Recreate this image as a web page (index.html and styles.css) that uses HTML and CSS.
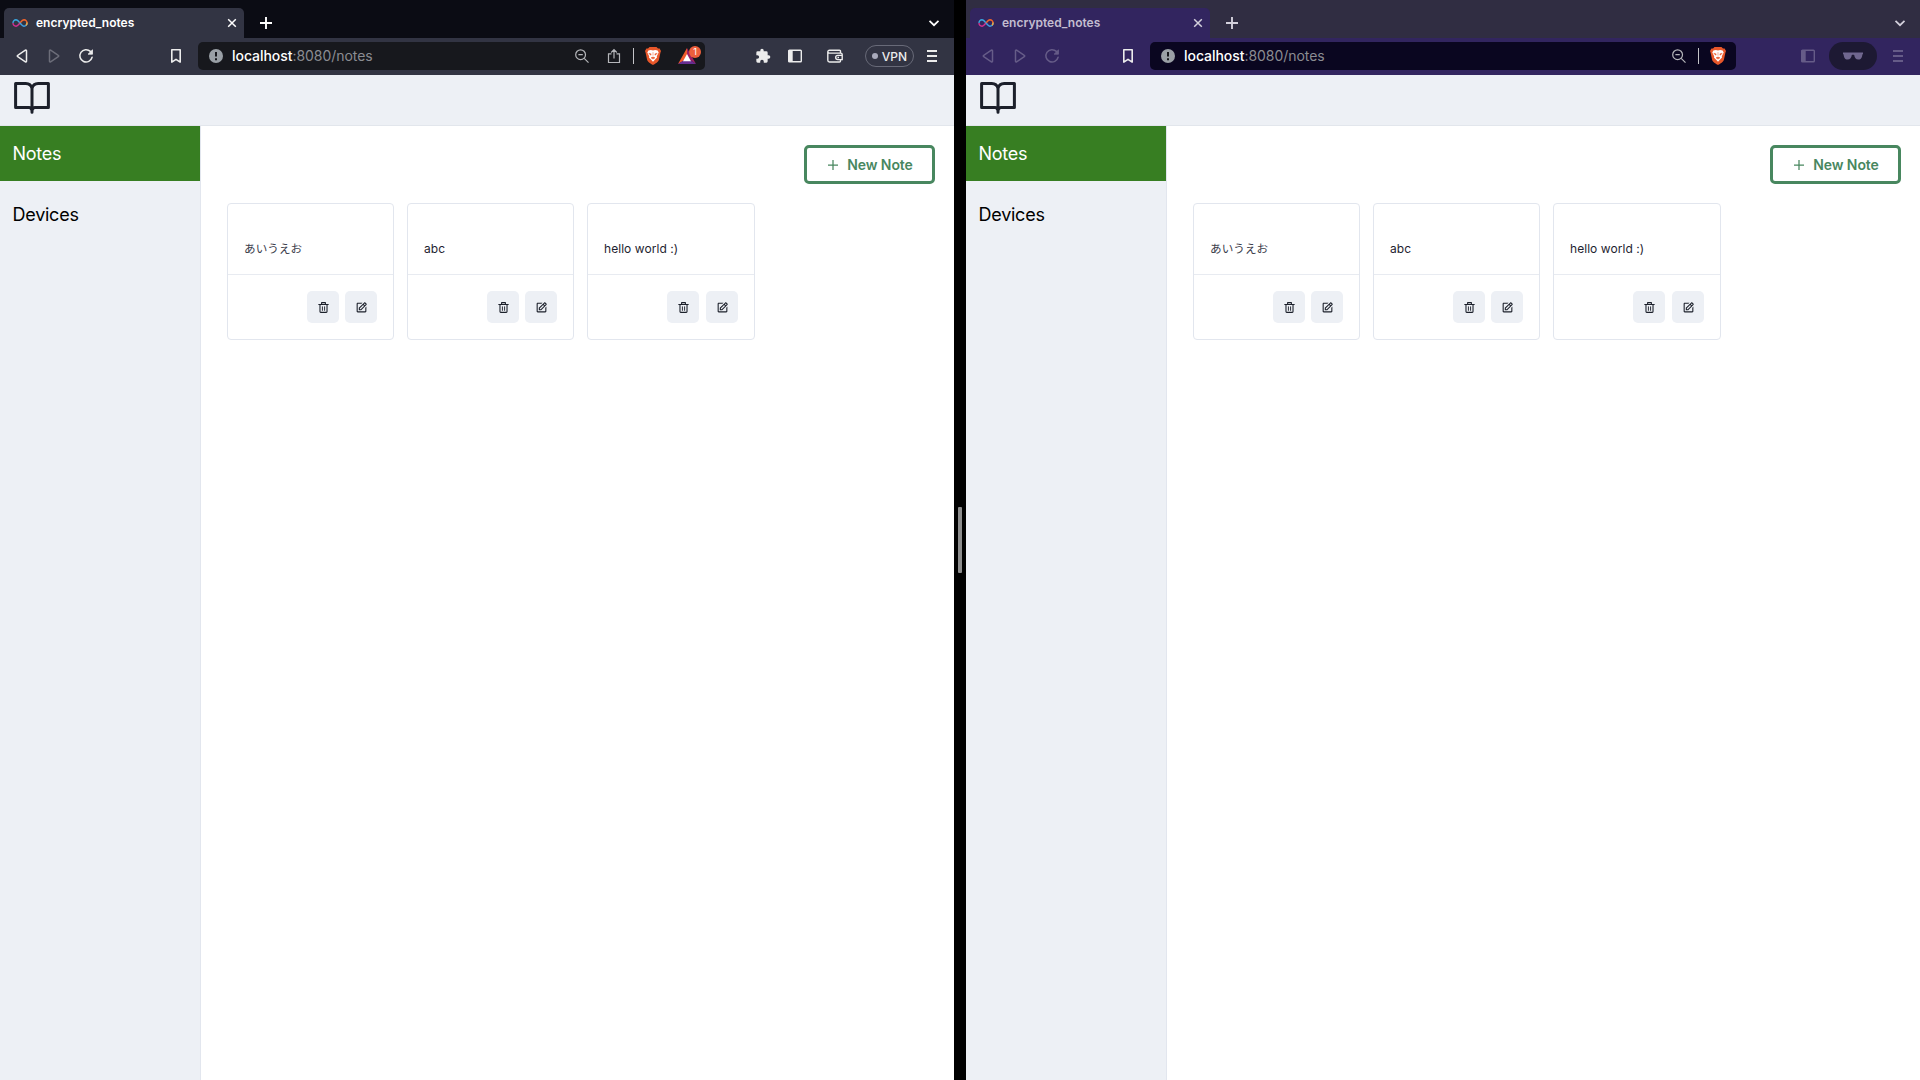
FILE: index.html
```html
<!DOCTYPE html>
<html lang="en">
<head>
<meta charset="utf-8">
<title>encrypted_notes</title>
<link rel="stylesheet" href="styles.css">
</head>
<body>
<svg class="sprite" width="0" height="0" aria-hidden="true">
  <defs>
    <symbol id="infinity" viewBox="0 0 16 10"><path d="M8 5C6.4 3 5.4 1.8 4 1.8A3.1 3.1 0 0 0 1 5" fill="none" stroke="#3aa7df" stroke-width="1.4"/><path d="M1 5A3.1 3.1 0 0 0 4 8.2C5.4 8.2 6.4 7 8 5" fill="none" stroke="#d0318f" stroke-width="1.4"/><path d="M8 5C9.6 3 10.6 1.8 12 1.8A3.1 3.1 0 0 1 15 5" fill="none" stroke="#f0642c" stroke-width="1.4"/><path d="M15 5A3.1 3.1 0 0 1 12 8.2C10.6 8.2 9.6 7 8 5" fill="none" stroke="#3f9fe0" stroke-width="1.4"/><path d="M14.9 4.4A3 3 0 0 1 14 7.3" fill="none" stroke="#f5a83b" stroke-width="1.4"/></symbol>
    <symbol id="back" viewBox="0 0 16 16"><path d="M12.5 2.8v10.4c0 .6-.6.9-1.1.6L3.7 8.7a.8.8 0 0 1 0-1.4l7.7-5.1c.5-.3 1.1 0 1.1.6z" fill="none" stroke="currentColor" stroke-width="1.5"/></symbol>
    <symbol id="reload" viewBox="0 0 16 16"><path d="M12.4 3.4A6.2 6.2 0 1 0 14.1 9.3" fill="none" stroke="currentColor" stroke-width="1.5" stroke-linecap="round"/><path d="M14.5 1.8v4.4h-4.4z" fill="currentColor" stroke="currentColor" stroke-width=".8" stroke-linejoin="round"/></symbol>
    <symbol id="bookmark" viewBox="0 0 16 16"><path d="M3.8 1.7h8.4v12.4L8 11.3l-4.2 2.8z" fill="none" stroke="currentColor" stroke-width="1.6" stroke-linejoin="round"/></symbol>
    <symbol id="info" viewBox="0 0 16 16"><circle cx="8" cy="8" r="7" fill="#9aa0a6"/><path d="M8 4v4.6M8 10.3v2" stroke="#17181d" stroke-width="2"/></symbol>
    <symbol id="zoomout" viewBox="0 0 16 16"><g fill="none" stroke="currentColor" stroke-width="1.2"><circle cx="6.600" cy="6.700" r="4.900"/><path d="M10.200 10.300l4.300 4.300M4.400 6.700h4.400"/></g></symbol>
    <symbol id="share" viewBox="0 0 16 16"><g fill="none" stroke="currentColor" stroke-width="1.2"><path d="M5.500 5.800h-3v8.700h11V5.800h-3M8 10.500V1.800M5.200 4.500L8 1.700l2.800 2.800"/></g></symbol>
    <symbol id="brave" viewBox="0 0 18 20"><path d="M5.500 1h7l1.500 1.600 1.600-.1L17 5l-.6 1.700-1.500 7.100c-.4 1.700-3.600 4.300-5.900 5.200-2.300-.9-5.500-3.500-5.900-5.200L1.600 6.700 1 5l1.400-2.500 1.600.1z" fill="#e8572a"/><path d="M9 4.400l2.200-.5 2.400.7 1.100 2-1.900 3.600.2 1.400L9 15.700l-4-4.100.2-1.400L3.300 6.600l1.100-2 2.400-.7z" fill="#fff"/><path d="M4.800 7.200l2.400.7-.5 1.400zM13.200 7.200l-2.400.7.5 1.400zM9 6.200v3.400M7 11.800l2-.8 2 .8-2 1.300z" fill="#e8572a" stroke="#e8572a" stroke-width=".5"/></symbol>
    <symbol id="bat" viewBox="0 0 18 16"><path d="M9 0L0 16l9-5.300z" fill="#f15a2c"/><path d="M9 0l9 16-9-6z" fill="#9e1f63"/><path d="M0 16h18l-5-3.500H5.500z" fill="#662d91"/><path d="M9 6l4 7.200H5z" fill="#fff"/></symbol>
    <symbol id="puzzle" viewBox="0 0 24 24"><path d="M20.500 11H19V7a2 2 0 0 0-2-2h-4V3.500a2.500 2.500 0 0 0-5 0V5H4a2 2 0 0 0-2 2v3.800h1.500a2.700 2.700 0 0 1 0 5.400H2V20a2 2 0 0 0 2 2h3.800v-1.500a2.700 2.700 0 0 1 5.400 0V22H17a2 2 0 0 0 2-2v-4h1.500a2.500 2.500 0 0 0 0-5z" fill="currentColor"/></symbol>
    <symbol id="panel" viewBox="0 0 16 16"><rect x="1.700" y="2.200" width="12.600" height="11.600" rx=".8" fill="none" stroke="currentColor" stroke-width="1.4"/><path d="M1.500 2h4.200v12H1.500z" fill="currentColor"/></symbol>
    <symbol id="wallet" viewBox="0 0 16 16"><g fill="none" stroke="currentColor" stroke-width="1.4"><path d="M13.500 4.800V3.200a1 1 0 0 0-1-1h-10A1.700 1.700 0 0 0 .8 3.900v8.400A1.700 1.700 0 0 0 2.500 14h10a1 1 0 0 0 1-1v-1.200M.8 3.700c0 .8.700 1.400 1.700 1.400h11.300c.8 0 1.400.6 1.400 1.300v5.200h-4.400a2.100 2.100 0 0 1 0-4.200h4.400M10.500 9.500h1.500"/></g></symbol>
    <symbol id="menu" viewBox="0 0 16 16"><path d="M3 3h10M3 8h10M3 13h10" stroke="currentColor" stroke-width="1.9"/></symbol>
    <symbol id="glasses" viewBox="0 0 20 8"><path d="M0 .4h20v1.800h-.6c-.2 3-1.200 5.300-4 5.300-2.700 0-3.800-2-4.200-4.500-.7-.5-1.700-.5-2.400 0C8.400 5.500 7.300 7.500 4.600 7.500c-2.800 0-3.800-2.300-4-5.300H0z" fill="currentColor"/></symbol>
    <symbol id="chevron" viewBox="0 0 12 12"><path d="M1.500 3.800L6 8.200l4.500-4.400" fill="none" stroke="currentColor" stroke-width="1.7"/></symbol>
    <symbol id="close" viewBox="0 0 10 10"><path d="M1.200 1.200l7.600 7.600M8.800 1.200L1.200 8.800" stroke="currentColor" stroke-width="1.5"/></symbol>
    <symbol id="plus" viewBox="0 0 12 12"><path d="M6 0v12M0 6h12" stroke="currentColor" stroke-width="var(--w, 1.9)"/></symbol>
    <symbol id="book" viewBox="0 0 36 32"><path d="M18 6.500C17.300 3.600 15 1.600 11.800 1.600H1.600v23.800H15c1.600 0 2.600 1 3 3M18 6.500c.7-2.900 3-4.900 6.200-4.900h10.200v23.800H21c-1.600 0-2.600 1-3 3M18 6.500v23.700" fill="none" stroke="currentColor" stroke-width="3" stroke-linejoin="round" stroke-linecap="round"/></symbol>
    <symbol id="trash" viewBox="0 0 24 24"><path fill="none" stroke="currentColor" stroke-width="2" stroke-linejoin="round" d="M5.500 7v12.500c0 .8.500 1.500 1.300 1.500h10.400c.8 0 1.300-.7 1.300-1.500V7M2.500 6.500h19M8.500 6V3h7v3"/><path stroke="currentColor" stroke-width="1.7" d="M10 10v8M14 10v8"/></symbol>
    <symbol id="edit" viewBox="0 0 24 24"><path fill="currentColor" d="m7 17.013 4.413-.015 9.632-9.540c.378-.378.586-.880.586-1.414s-.208-1.036-.586-1.414l-1.586-1.586c-.756-.756-2.075-.752-2.825-.003L7 12.583v4.430zM18.045 4.458l1.589 1.583-1.597 1.582-1.586-1.585 1.594-1.580zM9 13.417l6.030-5.973 1.586 1.586-6.029 5.971L9 15.006v-1.589z"/><path fill="currentColor" d="M5 21h14c1.103 0 2-.897 2-2v-8.668l-2 2V19H5V5h6.847l2-2H5c-1.103 0-2 .897-2 2v14c0 1.103.897 2 2 2z"/></symbol>
  </defs>
</svg>
<div class="desktop">
  <section class="window">
    <div class="tabs">
      <div class="tab"><svg class="favicon"><use href="#infinity"/></svg><span class="tab-title">encrypted_notes</span><svg class="close"><use href="#close"/></svg></div>
      <svg class="new-tab"><use href="#plus"/></svg>
      <svg class="chevron"><use href="#chevron"/></svg>
    </div>
    <div class="toolbar">
      <svg class="ico"><use href="#back"/></svg>
      <svg class="ico flip dim"><use href="#back"/></svg>
      <svg class="ico"><use href="#reload"/></svg>
      <svg class="ico mark"><use href="#bookmark"/></svg>
      <div class="url">
        <svg class="ico"><use href="#info"/></svg>
        <span class="address"><b>localhost</b>:8080/notes</span>
        <svg class="ico soft"><use href="#zoomout"/></svg>
        <svg class="ico soft share"><use href="#share"/></svg>
        <i class="sep"></i>
        <svg class="lion"><use href="#brave"/></svg>
        <span class="rewards"><svg><use href="#bat"/></svg><span class="count">1</span></span>
      </div>
      <div class="actions">
        <svg class="ico"><use href="#puzzle"/></svg>
        <svg class="ico panel"><use href="#panel"/></svg>
        <svg class="ico wallet"><use href="#wallet"/></svg>
        <span class="vpn"><i></i>VPN</span>
        <svg class="ico menu"><use href="#menu"/></svg>
      </div>
    </div>
    <header class="header"><svg class="book"><use href="#book"/></svg></header>
    <div class="body">
      <nav class="side"><a class="link active">Notes</a><a class="link">Devices</a></nav>
      <main class="main">
        <button class="new-note"><svg><use href="#plus"/></svg>New Note</button>
        <div class="cards">
          <article class="card"><p class="jp">あいうえお</p><footer><button><svg><use href="#trash"/></svg></button><button><svg><use href="#edit"/></svg></button></footer></article>
          <article class="card"><p>abc</p><footer><button><svg><use href="#trash"/></svg></button><button><svg><use href="#edit"/></svg></button></footer></article>
          <article class="card"><p>hello world :)</p><footer><button><svg><use href="#trash"/></svg></button><button><svg><use href="#edit"/></svg></button></footer></article>
        </div>
      </main>
    </div>
  </section>
  <div class="divider"><i></i></div>
  <section class="window private">
    <div class="tabs">
      <div class="tab"><svg class="favicon"><use href="#infinity"/></svg><span class="tab-title">encrypted_notes</span><svg class="close"><use href="#close"/></svg></div>
      <svg class="new-tab"><use href="#plus"/></svg>
      <svg class="chevron"><use href="#chevron"/></svg>
    </div>
    <div class="toolbar">
      <svg class="ico dim"><use href="#back"/></svg>
      <svg class="ico flip dim"><use href="#back"/></svg>
      <svg class="ico dim"><use href="#reload"/></svg>
      <svg class="ico mark"><use href="#bookmark"/></svg>
      <div class="url">
        <svg class="ico"><use href="#info"/></svg>
        <span class="address"><b>localhost</b>:8080/notes</span>
        <svg class="ico soft"><use href="#zoomout"/></svg>
        <i class="sep"></i>
        <svg class="lion"><use href="#brave"/></svg>
      </div>
      <div class="actions">
        <svg class="ico dim"><use href="#panel"/></svg>
        <span class="shades"><svg><use href="#glasses"/></svg></span>
        <svg class="ico menu dim"><use href="#menu"/></svg>
      </div>
    </div>
    <header class="header"><svg class="book"><use href="#book"/></svg></header>
    <div class="body">
      <nav class="side"><a class="link active">Notes</a><a class="link">Devices</a></nav>
      <main class="main">
        <button class="new-note"><svg><use href="#plus"/></svg>New Note</button>
        <div class="cards">
          <article class="card"><p class="jp">あいうえお</p><footer><button><svg><use href="#trash"/></svg></button><button><svg><use href="#edit"/></svg></button></footer></article>
          <article class="card"><p>abc</p><footer><button><svg><use href="#trash"/></svg></button><button><svg><use href="#edit"/></svg></button></footer></article>
          <article class="card"><p>hello world :)</p><footer><button><svg><use href="#trash"/></svg></button><button><svg><use href="#edit"/></svg></button></footer></article>
        </div>
      </main>
    </div>
  </section>
</div>
</body>
</html>
```
FILE: styles.css
```css
* { box-sizing: border-box; }
body { margin: 0; font-family: Inter, "Noto Sans CJK JP", sans-serif; overflow: hidden; }
svg { display: block; flex: none; }
button { font: inherit; padding: 0; border: 0; }
.sprite { position: absolute; }
.desktop { display: flex; width: 1920px; height: 1080px; background: #000; }
.window { width: 954px; display: flex; flex-direction: column; background: #fff; }
.divider { width: 12px; display: flex; align-items: center; justify-content: center; }
.divider i { width: 4px; height: 66px; border-radius: 1px; background: #8c8c8c; }

.tabs { height: 38px; background: #0b0c14; display: flex; align-items: center; padding: 8px 14px 0 4px; color: #fff; }
.tab { width: 240px; height: 30px; background: #323443; border-radius: 5px 5px 0 0; display: flex; align-items: center; padding: 0 7px 0 8px; }
.favicon { width: 16px; height: 10px; }
.tab-title { flex: 1; margin-left: 8px; font-size: 12px; line-height: 30px; font-weight: 600; }
.close { width: 10px; height: 10px; }
.new-tab { width: 12px; height: 12px; margin-left: 16px; }
.chevron { width: 12px; height: 12px; margin-left: auto; }

.toolbar { height: 37px; background: #323443; color: #ececec; display: flex; align-items: center; padding: 0 14px 1px; gap: 16px; }
.ico { width: 16px; height: 16px; }
.flip { transform: scaleX(-1); }
.dim { color: #6c6d79; }
.mark { margin-left: 58px; margin-right: -2px; }
.url { width: 507px; height: 28px; border-radius: 5px; background: #17181d; display: flex; align-items: center; padding: 0 4px 0 10px; }
.address { flex: 1; margin-left: 8px; font-size: 14px; letter-spacing: -0.05px; color: #8b8c92; line-height: 28px; }
.address b { font-weight: 500; color: #fff; }
.soft { color: #b5b6ba; }
.share { margin-left: 16px; }
.sep { width: 1px; height: 16px; background: #c4c4c8; margin: 0 10px 0 11px; }
.lion { width: 18px; height: 20px; }
.rewards { display: flex; position: relative; width: 24px; margin-left: 15px; padding-left: 1px; }
.rewards svg { width: 18px; height: 16px; }
.count { position: absolute; right: 0; top: -2px; width: 12px; height: 12px; border-radius: 6px; background: #ee5f3c; color: #fff; font-size: 9px; line-height: 12px; text-align: center; }
.actions { margin-left: auto; display: flex; align-items: center; }
.panel { margin-left: 16px; }
.wallet { margin-left: 24px; }
.vpn { margin-left: 22px; width: 49px; height: 22px; border: 1px solid #686a78; border-radius: 11px; display: flex; align-items: center; justify-content: center; gap: 4px; font-size: 12px; font-weight: 500; }
.vpn i { width: 6px; height: 6px; border-radius: 3px; background: #a9aabb; }
.menu { margin-left: 10px; }

.private .tabs { background: #302d42; color: #d3d0dc; }
.private .tab, .private .toolbar { background: #32255f; }
.private .tab-title { color: #c3bdd0; }
.private .dim { color: #665c88; }
.private .mark { margin-left: 44px; }
.private .url { width: 586px; background: #0a0620; padding-right: 9px; }
.shades { margin-left: 13px; width: 48px; height: 28px; border-radius: 14px; background: #1d1933; color: #70678f; display: flex; align-items: center; justify-content: center; }
.shades svg { width: 20px; height: 8px; }
.private .menu { margin-left: 13px; }

.header { height: 51px; background: #edf0f5; border-bottom: 1px solid #e2e6ec; padding: 7px 14px; color: #1c202b; }
.book { width: 36px; height: 32px; }
.body { flex: 1; display: flex; }
.side { width: 201px; background: #edf0f5; border-right: 1px solid #e2e6ee; display: flex; flex-direction: column; gap: 6px; }
.link { height: 55px; line-height: 55px; padding-left: 12.5px; font-size: 18px; letter-spacing: -0.25px; color: #000; }
.active { background: #377e22; color: #fff; box-shadow: none; margin-right: 0; }
.main { flex: 1; display: flex; flex-direction: column; padding: 19px 19px 0 26px; }
.new-note { align-self: flex-end; width: 131px; height: 39px; border: 3px solid #48875f; border-radius: 5px; background: #fff; color: #48875f; font-size: 14px; font-weight: 600; letter-spacing: -0.1px; display: flex; align-items: center; justify-content: center; gap: 9px; padding-left: 2px; }
.new-note svg { width: 10px; height: 10px; --w: 1.5; }
.cards { display: grid; grid-template-columns: 167px 167px 168px; gap: 13px; margin-top: 19px; }
.card { height: 137px; border: 1px solid #e2e6ee; border-radius: 4px; }
.card p { margin: 0; height: 71px; border-bottom: 1px solid #e8ebf1; padding: 35px 16px 0; font-size: 12px; letter-spacing: 0.05px; line-height: 20px; color: #1e2330; }
.card .jp { font-size: 11.6px; color: #3c404c; }
.card footer { display: flex; justify-content: flex-end; gap: 6px; padding: 16px 16px 0; }
.card:last-child footer { gap: 7px; }
.card button { width: 32px; height: 32px; border-radius: 5px; background: #edf0f5; color: #1c202b; display: flex; align-items: center; justify-content: center; }
.card button svg { width: 13px; height: 13px; }
```
